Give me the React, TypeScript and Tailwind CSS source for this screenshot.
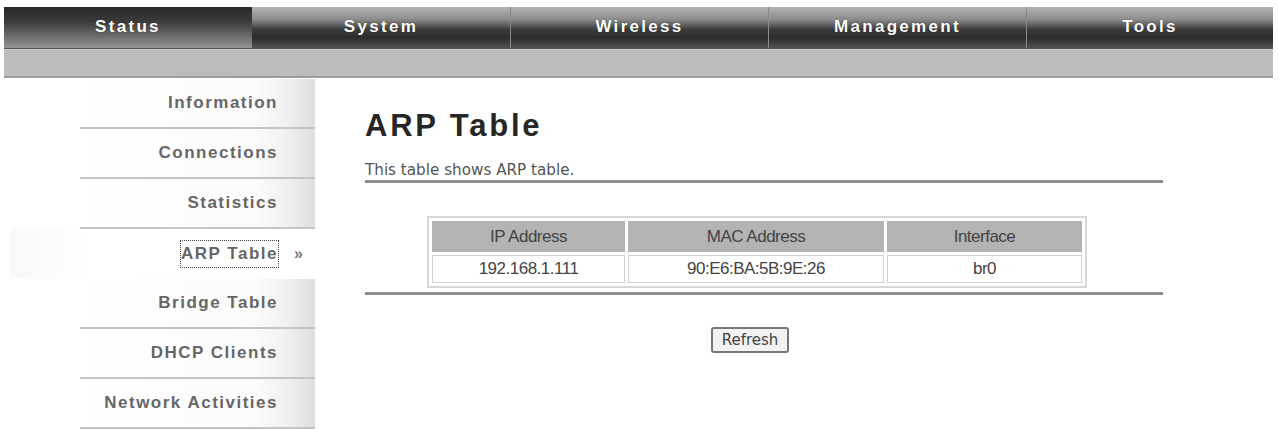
import React from "react";

const tabs = [
  { label: "Status", w: "w-[248px]", active: true },
  { label: "System", w: "w-[258px]", active: false },
  { label: "Wireless", w: "w-[258px]", active: false },
  { label: "Management", w: "w-[258px]", active: false },
  { label: "Tools", w: "flex-1", active: false },
];

const side = [
  "Information",
  "Connections",
  "Statistics",
  "ARP Table",
  "Bridge Table",
  "DHCP Clients",
  "Network Activities",
];

export default function App() {
  return (
    <div className="w-[1278px] h-[429px] bg-white overflow-hidden" style={{ fontFamily: '"Liberation Sans", Arial, sans-serif' }}>
      {/* top nav */}
      <div className="pt-[7px] pl-[4px] pr-[5px]">
        <div className="flex h-[42px] border-b border-[#555]">
          {tabs.map((t, i) => (
            <div
              key={t.label}
              className={`${t.w} flex items-center justify-center text-white font-bold text-[17px] tracking-[2.3px] ${
                t.active
                  ? "bg-[linear-gradient(to_bottom,#2a2a2a_0%,#3a3a3a_35%,#6a6a6a_70%,#959595_100%)]"
                  : "bg-[linear-gradient(to_bottom,#b4b4b4_0%,#8c8c8c_30%,#3a3a3a_55%,#2c2c2c_75%,#545454_100%)]"
              } ${i > 1 ? "border-l border-[#8a8a8a]" : ""}`}
              style={{ textShadow: "0 0 1px rgba(0,0,0,0.6)" }}
            >
              <span className="pb-[1px]">{t.label}</span>
            </div>
          ))}
        </div>
        <div className="h-[29px] bg-[#bdbbbb] border-b-2 border-[#9d9b9b] border-t border-t-[#cfcdcd]" />
      </div>

      <div className="flex">
        {/* sidebar */}
        <div className="w-[315px] shrink-0 pt-[1px]">
          {side.map((s) => {
            const active = s === "ARP Table";
            return (
              <div key={s} className={`h-[50px] ${active ? "pl-[10px]" : "pl-[80px]"}`}>
                <div
                  className={`h-full flex items-center justify-end ${
                    active
                      ? "bg-[linear-gradient(to_right,#f8f8f8_0%,#ffffff_25%,#ffffff_100%)]"
                      : "bg-[linear-gradient(to_right,#ffffff_0%,#fbfbfb_75%,#eeeeee_90%,#dedede_100%)] border-b-2 border-[#c4c4c4]"
                  }`}
                >
                  <span
                    className={`font-bold text-[17px] tracking-[1.5px] text-[#666] ${
                      active ? "outline-1 outline-dotted outline-[#444] text-[#555]" : ""
                    }`}
                  >
                    {s}
                  </span>
                  <span className="w-[37px] text-[#777] text-[16px] font-bold pl-[16px]">{active ? "»" : ""}</span>
                </div>
              </div>
            );
          })}
        </div>

        {/* content */}
        <div className="pl-[50px] pt-[30px] w-[848px]">
          <h1 className="text-[31px] leading-[36px] font-bold tracking-[2.8px] text-[#262626]">ARP Table</h1>
          <p className="mt-[18px] text-[15.2px] leading-[16px] text-[#555]" style={{ fontFamily: '"DejaVu Sans", Verdana, sans-serif' }}>
            This table shows ARP table.
          </p>
          <div className="mt-[2px] h-[3px] bg-[#8d8d8d] w-[798px]" />

          <div className="mt-[33px] ml-[62px] w-[660px] border-2 border-[#d8d8d8]">
            <table className="w-full border-separate border-spacing-x-[3px] border-spacing-y-[3px] text-[17px] text-[#444] tracking-[-0.5px]">
              <tbody>
                <tr>
                  <td className="w-[193px] h-[31px] bg-[#b3b3b3] text-center">IP Address</td>
                  <td className="w-[256px] bg-[#b3b3b3] text-center">MAC Address</td>
                  <td className="bg-[#b3b3b3] text-center">Interface</td>
                </tr>
                <tr>
                  <td className="h-[27px] border border-[#d0d0d0] text-center">192.168.1.111</td>
                  <td className="border border-[#d0d0d0] text-center">90:E6:BA:5B:9E:26</td>
                  <td className="border border-[#d0d0d0] text-center">br0</td>
                </tr>
              </tbody>
            </table>
          </div>
          <div className="mt-[4px] h-[3px] bg-[#8d8d8d] w-[798px]" />

          <div className="mt-[32px] pl-[346px]">
            <button
              className="w-[78px] h-[26px] border-2 border-[#777] rounded-[3px] bg-[#f2f2f2] text-[15px] text-[#444]"
              style={{ fontFamily: '"DejaVu Sans", Tahoma, sans-serif' }}
            >
              Refresh
            </button>
          </div>
        </div>
      </div>
    </div>
  );
}
